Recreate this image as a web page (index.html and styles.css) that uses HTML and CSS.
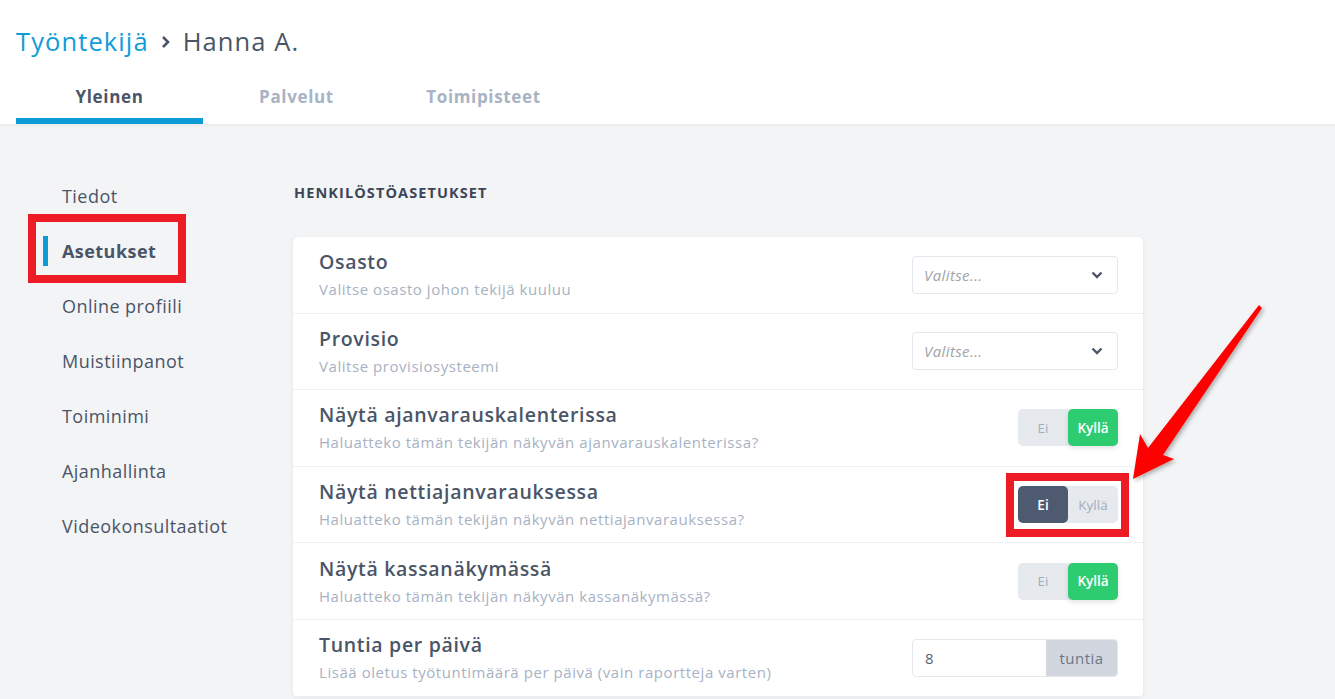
FILE: index.html
```html
<!DOCTYPE html>
<html lang="fi">
<head>
<meta charset="utf-8">
<title>Työntekijä - Hanna A.</title>
<link rel="stylesheet" href="styles.css">
</head>
<body>
<header class="topbar">
  <h1 class="crumbs"><span class="crumb-link">Työntekijä</span>
    <svg class="crumb-sep" width="14" height="16" viewBox="0 0 14 16"><path d="M4 3l5 5-5 5" fill="none" stroke="#4a5568" stroke-width="2.6"/></svg>
    <span class="crumb-current">Hanna A.</span></h1>
  <nav class="tabs">
    <a class="tab active">Yleinen</a>
    <a class="tab">Palvelut</a>
    <a class="tab">Toimipisteet</a>
  </nav>
</header>
<div class="page">
  <aside class="side">
    <a class="side-item">Tiedot</a>
    <a class="side-item active"><span class="bar"></span>Asetukset</a>
    <a class="side-item">Online profiili</a>
    <a class="side-item">Muistiinpanot</a>
    <a class="side-item">Toiminimi</a>
    <a class="side-item">Ajanhallinta</a>
    <a class="side-item">Videokonsultaatiot</a>
  </aside>
  <main class="content">
    <h2 class="section-title">HENKILÖSTÖASETUKSET</h2>
    <div class="card">
      <div class="row">
        <div class="text"><div class="title">Osasto</div><div class="sub">Valitse osasto johon tekijä kuuluu</div></div>
        <div class="select"><span>Valitse...</span><svg width="12" height="8" viewBox="0 0 12 8"><path d="M1.5 1.5l4.5 4.5 4.5-4.5" fill="none" stroke="#4a5568" stroke-width="2.4"/></svg></div>
      </div>
      <div class="row">
        <div class="text"><div class="title">Provisio</div><div class="sub">Valitse provisiosysteemi</div></div>
        <div class="select"><span>Valitse...</span><svg width="12" height="8" viewBox="0 0 12 8"><path d="M1.5 1.5l4.5 4.5 4.5-4.5" fill="none" stroke="#4a5568" stroke-width="2.4"/></svg></div>
      </div>
      <div class="row">
        <div class="text"><div class="title">Näytä ajanvarauskalenterissa</div><div class="sub">Haluatteko tämän tekijän näkyvän ajanvarauskalenterissa?</div></div>
        <div class="toggle"><span class="opt">Ei</span><span class="opt yes">Kyllä</span></div>
      </div>
      <div class="row">
        <div class="text"><div class="title">Näytä nettiajanvarauksessa</div><div class="sub">Haluatteko tämän tekijän näkyvän nettiajanvarauksessa?</div></div>
        <div class="toggle"><span class="opt no">Ei</span><span class="opt">Kyllä</span></div>
      </div>
      <div class="row">
        <div class="text"><div class="title">Näytä kassanäkymässä</div><div class="sub">Haluatteko tämän tekijän näkyvän kassanäkymässä?</div></div>
        <div class="toggle"><span class="opt">Ei</span><span class="opt yes">Kyllä</span></div>
      </div>
      <div class="row">
        <div class="text"><div class="title">Tuntia per päivä</div><div class="sub">Lisää oletus työtuntimäärä per päivä (vain raportteja varten)</div></div>
        <div class="input-group"><span class="input">8</span><span class="addon">tuntia</span></div>
      </div>
    </div>
  </main>
</div>
<svg class="annotations" width="1335" height="699" viewBox="0 0 1335 699">
  <defs>
    <filter id="sh" x="-20%" y="-20%" width="140%" height="140%"><feDropShadow dx="2" dy="2" stdDeviation="2" flood-color="#000" flood-opacity="0.3"/></filter>
  </defs>
  <rect x="32" y="218" width="150" height="61" fill="none" stroke="#ed1c24" stroke-width="8"/>
  <rect x="1010" y="477" width="115" height="56" fill="none" stroke="#ed1c24" stroke-width="8"/>
  <polygon filter="url(#sh)" fill="#ff0000" points="1259,305 1262,308 1163,455 1174,459 1133,479 1140,434 1148,448"/>
</svg>
</body>
</html>
```
FILE: styles.css
```css
* { box-sizing: border-box; }
html, body { margin: 0; padding: 0; }
body {
  background: #f3f4f6;
  font-family: "Open Sans", "Noto Sans", sans-serif;
  color: #4a5568;
  width: 1335px;
  height: 699px;
  overflow: hidden;
  position: relative;
}
.topbar {
  background: #fff;
  padding: 26px 0 0 16px;
  box-shadow: 0 1px 4px rgba(0,0,0,0.06);
  position: relative;
}
.crumbs {
  margin: 0;
  font-size: 25.5px;
  font-weight: 500;
  line-height: 30px;
  height: 30px;
  display: flex;
  align-items: center;
  gap: 10px;
  letter-spacing: 1.1px;
}
.crumb-link { color: #109cd8; }
.crumb-current { color: #4a5568; }
.crumb-sep { margin-top: 1px; }
.tabs {
  display: flex;
  margin-top: 16px;
}
.tab {
  width: 187px;
  text-align: center;
  font-size: 17px;
  font-weight: 700;
  line-height: 20px;
  padding: 15px 0 11px;
  border-bottom: 6px solid transparent;
  color: #a8b3c4;
  letter-spacing: 0.65px;
}
.tab.active { color: #4a5568; border-bottom-color: #0d9bd6; }
.page {
  display: flex;
  padding-top: 44px;
}
.side {
  width: 293px;
  padding-left: 43px;
  display: flex;
  flex-direction: column;
}
.side-item {
  height: 55px;
  display: flex;
  align-items: center;
  padding-left: 19px;
  font-size: 18px;
  color: #4a5568;
  letter-spacing: 0.45px;
}
.side-item.active {
  padding-left: 0;
  font-weight: 700;
  gap: 14px;
}
.bar {
  width: 5px;
  height: 30px;
  background: #0d9bd6;
}
.content { width: 850px; }
.section-title {
  margin: 15px 0 0 1px;
  font-size: 14.5px;
  line-height: 20px;
  font-weight: 700;
  color: #3d4656;
  letter-spacing: 1.1px;
}
.card {
  margin-top: 34px;
  background: #fff;
  border-radius: 5px;
  box-shadow: 0 1px 4px rgba(0,0,0,0.07);
}
.row {
  height: 76.6px;
  border-bottom: 1px solid #edf0f4;
  display: flex;
  align-items: center;
  justify-content: space-between;
  padding: 0 25px 0 26px;
}
.title {
  font-size: 19.5px;
  font-weight: 600;
  line-height: 24px;
  color: #4a5568;
  letter-spacing: 0.68px;
}
.sub {
  margin-top: 5px;
  font-size: 15px;
  line-height: 20px;
  color: #a7b2c3;
  letter-spacing: 0.55px;
}
.select {
  width: 206px;
  height: 38px;
  border: 1px solid #e4e8ee;
  border-radius: 4px;
  display: flex;
  align-items: center;
  justify-content: space-between;
  padding: 0 14px 0 11px;
  font-size: 15px;
  font-style: italic;
  color: #a0a4aa;
  letter-spacing: 0.4px;
}
.toggle {
  width: 100px;
  height: 37px;
  display: flex;
  background: #e6e9ee;
  border-radius: 5px;
}
.opt {
  flex: 1;
  display: flex;
  align-items: center;
  justify-content: center;
  font-size: 13.5px;
  color: #a0aec0;
  border-radius: 5px;
}
.opt.yes {
  background: #2ecc71;
  color: #fff;
  font-weight: 600;
  box-shadow: 0 2px 5px rgba(0,0,0,0.12);
}
.opt.no {
  background: #4d5a70;
  color: #fff;
  font-weight: 600;
}
.input-group {
  width: 206px;
  height: 38px;
  display: flex;
  border: 1px solid #e4e8ee;
  border-radius: 4px;
  overflow: hidden;
  font-size: 15px;
  letter-spacing: 0.5px;
}
.input {
  flex: 1;
  display: flex;
  align-items: center;
  padding-left: 12px;
  color: #5a6476;
}
.addon {
  width: 71px;
  background: #d2d6de;
  display: flex;
  align-items: center;
  justify-content: center;
  color: #6b7587;
}
.annotations {
  position: absolute;
  top: 0;
  left: 0;
  pointer-events: none;
}
```
